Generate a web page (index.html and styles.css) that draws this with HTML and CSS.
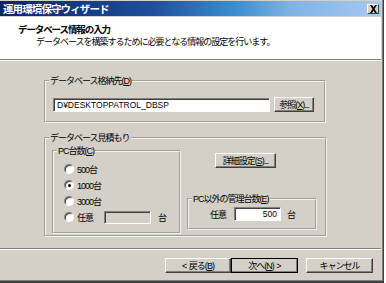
FILE: index.html
```html
<!DOCTYPE html>
<html lang="ja">
<head>
  <meta charset="UTF-8">
  <title>運用環境保守ウィザード</title>
  <link rel="stylesheet" href="styles.css">
</head>
<body>
  <div class="window">
    <div class="titlebar">
      <span class="title">運用環境保守ウィザード</span>
      <span class="close">
        <svg width="9" height="8" viewBox="0 0 9 8"><path d="M1 0h2l1.5 2.5L6 0h2L5.5 4 8 8H6L4.5 5.5 3 8H1l2.5-4z" fill="#000"/></svg>
      </span>
    </div>

    <div class="header">
      <h1>データベース情報の入力</h1>
      <p>データベースを構築するために必要となる情報の設定を行います。</p>
    </div>

    <div class="content">
      <fieldset class="group path-group">
        <legend>データベース格納先(<u>D</u>)</legend>
        <div class="path-row">
          <span class="field path-field">D¥DESKTOPPATROL_DBSP</span>
          <button class="btn browse">参照(<u>X</u>)...</button>
        </div>
      </fieldset>

      <fieldset class="group estimate-group">
        <legend>データベース見積もり</legend>
        <div class="estimate-grid">
          <fieldset class="group pc-group">
            <legend>PC台数(<u>C</u>)</legend>
            <div class="radio-row"><span class="radio"></span>500台</div>
            <div class="radio-row"><span class="radio checked"></span>1000台</div>
            <div class="radio-row"><span class="radio"></span>3000台</div>
            <div class="radio-row"><span class="radio"></span>任意<span class="field disabled"></span><span class="unit">台</span></div>
          </fieldset>

          <div class="right-col">
            <button class="btn detail">詳細設定(<u>S</u>)...</button>
            <fieldset class="group other-group">
              <legend>PC以外の管理台数(<u>E</u>)</legend>
              <div class="count-row">
                <span>任意</span>
                <span class="field num-field">500</span>
                <span>台</span>
              </div>
            </fieldset>
          </div>
        </div>
      </fieldset>
    </div>

    <div class="footer">
      <button class="btn nav">&lt; 戻る(<u>B</u>)</button>
      <button class="btn nav default">次へ(<u>N</u>) &gt;</button>
      <button class="btn nav cancel">キャンセル</button>
    </div>
  </div>
</body>
</html>
```

FILE: styles.css
```css
* {
  box-sizing: border-box;
  margin: 0;
  padding: 0;
}

body {
  background-color: #ffffff;
  font-family: "Liberation Sans", "Noto Sans CJK JP", sans-serif;
  font-size: 9px;
  letter-spacing: -1px;
  color: #000;
}

.window {
  width: 384px;
  height: 283px;
  padding-top: 1px;
  background-color: #d4d0c8;
  border-right: 1px solid #404040;
  border-bottom: 2px solid #404040;
  box-shadow: inset -1px -1px 0 #808080;
  display: flex;
  flex-direction: column;
}

/* title bar */
.titlebar {
  flex-shrink: 0;
  height: 15px;
  margin-right: 2px;
  background: linear-gradient(to right, #0a246a 0%, #1f4e9c 40%, #3b8fd0 62%, #7fb2e4 76%, #a6caf0 100%);
  display: flex;
  align-items: center;
  justify-content: space-between;
  padding: 0 2px 0 3px;
}

.title {
  color: #fff;
  font-weight: bold;
  font-size: 10.5px;
  letter-spacing: -0.9px;
}

.close {
  width: 12px;
  height: 10px;
  background-color: #d4d0c8;
  border: 1px solid;
  border-color: #fff #404040 #404040 #fff;
  display: flex;
  align-items: center;
  justify-content: center;
}

/* white header */
.header {
  flex-shrink: 0;
  height: 43px;
  margin-top: 1px;
  margin-right: 2px;
  background-color: #fff;
  border-bottom: 1px solid #808080;
  box-shadow: 0 1px 0 #fff;
  padding: 7px 0 0 18px;
}

.header h1 {
  font-size: 9.5px;
  font-weight: bold;
  letter-spacing: -1.1px;
  line-height: 11px;
}

.header p {
  margin: 2px 0 0 18px;
  line-height: 11px;
}

/* group boxes */
.content {
  flex: 1;
  min-height: 0;
  overflow: hidden;
  padding: 16px 0 0 44px;
}

.group {
  border: 2px groove #f4f2ee;
  min-width: 0;
  padding-left: 3px;
}

.group legend {
  line-height: 10px;
  padding: 0 1px;
}

.path-group {
  width: 282px;
  height: 47px;
  padding-top: 11px;
}

.path-row {
  display: flex;
  align-items: center;
  gap: 4px;
  margin-left: 4px;
}

.field {
  display: inline-block;
  height: 14px;
  background-color: #fff;
  border: 1px solid;
  border-color: #808080 #fff #fff #808080;
  box-shadow: inset 1px 1px 0 #404040;
  line-height: 12px;
  letter-spacing: 0;
}

.path-field {
  width: 217px;
  padding-left: 3px;
  font-size: 8.5px;
}

.btn {
  height: 15px;
  font-family: inherit;
  font-size: 9px;
  letter-spacing: -1px;
  word-spacing: 1px;
  background-color: #d4d0c8;
  border: 1px solid;
  border-color: #fff #404040 #404040 #fff;
  box-shadow: inset -1px -1px 0 #808080;
  line-height: 12px;
  padding: 0;
}

.browse {
  width: 40px;
}

.estimate-group {
  width: 283px;
  height: 104px;
  margin-top: 10px;
  padding-top: 3px;
}

.estimate-grid {
  display: flex;
  gap: 6px;
  padding-left: 3px;
}

.pc-group {
  width: 129px;
  height: 88px;
  padding-top: 5px;
}

.radio-row {
  display: flex;
  align-items: center;
  height: 16px;
  margin-left: 7px;
}

.radio {
  width: 10px;
  height: 10px;
  border-radius: 50%;
  background-color: #fff;
  border: 1px solid;
  border-color: #808080 #fff #fff #808080;
  box-shadow: inset 1px 1px 0 #404040;
  margin-right: 3px;
  position: relative;
}

.radio.checked::after {
  content: "";
  position: absolute;
  left: 3px;
  top: 3px;
  width: 3px;
  height: 3px;
  border-radius: 50%;
  background-color: #000;
}

.field.disabled {
  width: 47px;
  height: 13px;
  background-color: #d4d0c8;
  margin-left: 11px;
}

.unit {
  margin-left: 7px;
}

.right-col {
  display: flex;
  flex-direction: column;
  width: 130px;
}

.detail {
  width: 61px;
  margin: 7px 0 0 28px;
}

.other-group {
  margin-top: 26px;
  height: 36px;
  padding-top: 3px;
}

.count-row {
  display: flex;
  align-items: center;
  margin-left: 18px;
}

.num-field {
  width: 47px;
  text-align: right;
  padding-right: 3px;
  margin: 0 6px 0 8px;
  font-size: 8.5px;
}

/* footer */
.footer {
  flex-shrink: 0;
  height: 33px;
  margin-right: 2px;
  border-top: 1px solid #808080;
  box-shadow: inset 0 1px 0 #fff;
  display: flex;
  justify-content: flex-end;
  padding: 9px 8px 0 0;
}

.nav {
  width: 66px;
}

.nav.default {
  width: 67px;
  outline: 1px solid #000;
  outline-offset: -1px;
}

.nav.cancel {
  width: 67px;
  margin-left: 8px;
}
```
